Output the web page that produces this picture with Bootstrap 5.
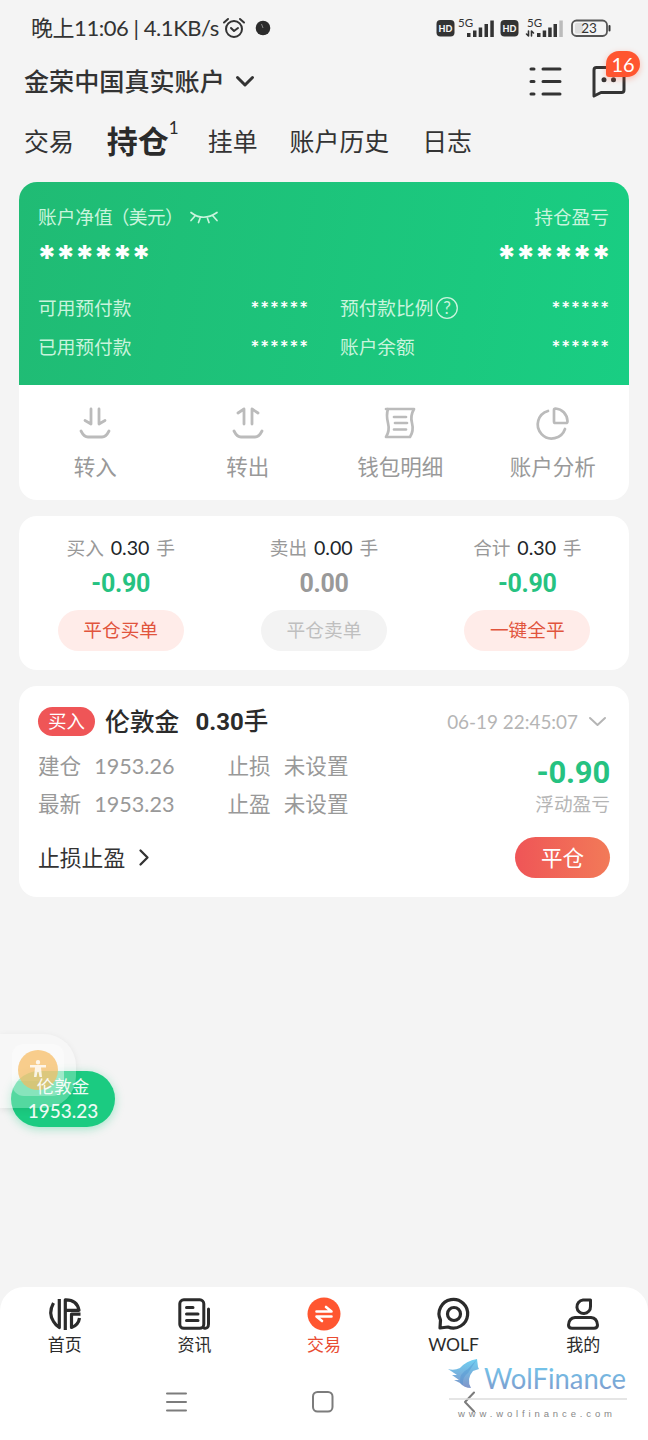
<!DOCTYPE html>
<html lang="zh-CN">
<head>
<meta charset="utf-8">
<meta name="viewport" content="width=device-width, initial-scale=1">
<title>持仓</title>
<link href="https://cdn.jsdelivr.net/npm/bootstrap@5.3.0/dist/css/bootstrap.min.css" rel="stylesheet">
<style>
body{background:#f4f4f4;color:#333;font-family:Lato,"Noto Sans CJK SC",sans-serif;font-size:18.7px;line-height:28px;width:648px;height:1440px;overflow:hidden;position:relative}
svg{display:block;flex:none;overflow:visible}
.ln{fill:none;stroke:currentColor;stroke-linecap:round;stroke-linejoin:round}
.statusbar{height:56px;padding-left:31px;font-size:22px}
.acct{height:50px;padding-left:24px}
.acct-name{font-size:25.1px;font-weight:500}
.count{position:absolute;left:77px;top:-29px;background:#ff5530;color:#fff;border-radius:13px 13px 13px 3px;width:34px;height:26px;font-size:20px;line-height:26px;text-align:center;box-shadow:0 2px 6px #ff553055}
.tabs{height:70px;padding-left:24px;font-size:24.9px}
.tabs .on{font-size:31px;font-weight:700;margin-left:33px;margin-right:39px;color:#2b2b2b}
.on sup{position:absolute;left:62px;top:-9px;font-size:17px;font-weight:400;line-height:20px}
.panel{background:#fff;border-radius:18px;margin:0 19px 16px;overflow:hidden}
.green{background:linear-gradient(100deg,#20bb74,#19ce83);height:203px;padding:21px 20px 0 19px;color:#c9f4dd}
.stars{color:#fff;font-family:Inter,sans-serif}
.s-lg{font-size:34px;font-weight:800;letter-spacing:-.95px;line-height:42px;height:42px;padding-top:6px}
.s-lg span:first-child{margin-left:-1px}
.s-sm{font-size:17px;font-weight:500;letter-spacing:.9px;line-height:28px;padding-top:0}
.s-sm,.s-lg span:last-child{margin-right:-1px}
.g-row{height:28px;margin-bottom:11px}
.actions{height:115px;color:#999;font-size:21.5px}
.actions svg{color:#bbb}
.act{margin-top:-2px;margin-bottom:14px}
.gray{color:#999}.dim{color:#b5b5b5}.up{color:#26c281}
.din{font-family:Roboto,"Noto Sans CJK SC",sans-serif;font-weight:700}
.lots{word-spacing:2px;height:28px}
.lots b{font-size:19.6px}
.sum{font-size:25px;line-height:44px;height:48px;letter-spacing:-.3px}
.pill{width:126px;height:41px;border-radius:21px;line-height:41px;font-size:18.7px;background:#ffece9;color:#e1543d;text-align:center}
.pill.off{background:#f3f3f3;color:#bfbfbf}
.tag{background:#ef5557;color:#fff;border-radius:15px;width:57px;height:29px;line-height:29px;text-align:center;font-size:18.5px}
.kv{font-size:21.6px;color:#999;height:37.5px;line-height:39px}
.closebtn{width:95px;height:41px;border-radius:21px;background:linear-gradient(90deg,#ef5557,#f27a58);color:#fff;font-size:21.6px;line-height:42px;text-align:center}
.quote{position:absolute;left:11px;top:1071px;width:104px;height:56px;border-radius:28px;background:#1bcb81;color:#fff;box-shadow:0 2px 10px #1bcb8160;text-align:center;font-size:17.5px;line-height:24px;padding-top:4px}
.quote-text{position:relative;z-index:3;opacity:.92}
.assist{position:absolute;left:0;top:1034px;width:76px;height:74px;border-radius:0 32px 32px 0;background:#ffffff40;box-shadow:0 2px 7px #00000014}
.assist svg{position:absolute;left:12px;top:10px}
.dock{position:absolute;left:0;right:0;bottom:0;height:153px;background:#fff;border-radius:24px 24px 0 0}
.dock .tab-i{font-size:17px;line-height:22px;height:76px;padding-top:11px;color:#2b2b2b}
.tab-i span{margin-top:4px}
.sysnav{height:77px;color:#7c7c7c}
.wm{position:absolute;left:446px;top:1354px}
</style>
</head>
<body>
<header class="statusbar d-flex align-items-center position-relative">
  <span class="text-nowrap" style="letter-spacing:-.45px;width:188px">晚上11:06 | 4.1KB/s</span>
  <svg style="margin-left:4px" width="22" height="22" viewBox="0 0 22 22"><g class="ln" stroke-width="2"><circle cx="11" cy="12" r="8"/><path d="M1 5.500L5 2M21 5.500L17 2M8 11l3 3 4-3"/></g></svg>
  <svg style="margin-left:10px" width="16" height="16"><circle cx="8" cy="8" r="7.300" fill="#2b2b2b"/><path d="M6.500 4L8 8" stroke="#888"/></svg>
  <svg class="position-absolute" style="left:436px;top:16px" width="176" height="24" viewBox="436 16 176 24" fill="#333" font-family="Lato">
    <rect x="436.500" y="20" width="18" height="16.500" rx="4"/><rect x="500.500" y="20" width="18" height="16.500" rx="4"/>
    <g fill="#f4f4f4" font-size="9" font-weight="900" text-anchor="middle"><text x="445.500" y="31.700">HD</text><text x="509.500" y="31.700">HD</text></g>
    <g font-size="11.500"><text x="458" y="27">5G</text><text x="527" y="27">5G</text></g>
    <path d="M467 33h3.500v4H467zM473 30.500h3.500V37H473zM478.700 27.500h3.500V37h-3.500zM484.500 24h3.500v13h-3.500zM490.300 20.500h3.500V37h-3.500z"/>
    <path d="M537 33h3.500v4H537zM542.700 30.500h3.500V37h-3.500zM548.200 27.500h3.500V37h-3.500zM553.500 24h3.500v13h-3.500z"/><path fill="#bbb" d="M559.300 20.500h3.500V37h-3.500z"/>
    <path class="ln" style="stroke-width:1.600" d="M528.500 31v5l-2-2M531.500 36v-5l2 2"/>
    <rect x="572" y="20.500" width="35" height="15.500" rx="4.500" fill="none" stroke="#555" stroke-width="1.800"/><rect x="575" y="23" width="8" height="10.500" rx="1.500" fill="#ddd"/><rect x="608.500" y="25" width="2" height="6.500" rx="1"/>
    <text x="589" y="33.300" font-size="13.500" text-anchor="middle">23</text>
  </svg>
</header>

<div class="acct d-flex align-items-center position-relative">
  <span class="acct-name">金荣中国真实账户</span>
  <svg style="margin-left:11px" width="18" height="11" viewBox="0 0 18 11"><path class="ln" stroke-width="3" d="M1.500 1.500L9 9l7.500-7.500"/></svg>
  <div class="position-absolute" style="left:529px;top:24px">
    <svg width="97" height="36" viewBox="529 65 97 36" style="margin-top:-15px"><g class="ln" stroke-width="3"><path d="M531 69h3M531 81.500h3M531 94h3M543 69h17M543 81.500h17M543 94h17"/><path d="M594 96V70q0-2.500 2.500-2.500h25q2.500 0 2.500 2.500V90q0 2.500-2.500 2.500H601z"/></g><circle cx="604" cy="79.700" r="2.500" fill="#333"/><circle cx="613.500" cy="79.700" r="2.500" fill="#333"/></svg>
    <span class="count">16</span>
  </div>
</div>

<nav class="tabs d-flex align-items-center" style="margin-bottom:6px">
  <span>交易</span><span class="on position-relative">持仓<sup>1</sup></span><span>挂单</span><span style="margin-left:32px">账户历史</span><span style="margin-left:33px">日志</span>
</nav>

<section class="panel">
  <div class="green">
    <div class="d-flex justify-content-between"><span class="d-flex align-items-center">账户净值<span style="margin:0 2px 0 -2px;letter-spacing:-.6px">（美元）</span>
      <svg style="margin-left:5px" width="28" height="12" viewBox="0 0 28 12"><path class="ln" stroke-width="1.700" d="M1 1.500Q13 11 27 1.500M5 5L1 9.500M10 7.500L8.500 11.500M17.500 7.500L19 11.500M23 5L27 9.500"/></svg></span><span>持仓盈亏</span></div>
    <div class="d-flex justify-content-between stars s-lg"><span>******</span><span>******</span></div>
    <div class="row g-0 g-row" style="margin-top:21px"><div class="d-flex justify-content-between" style="width:270px"><span>可用预付款</span><span class="stars s-sm">******</span></div>
      <div class="col d-flex justify-content-between" style="margin-left:32px"><span class="d-flex align-items-center" style="height:28px">预付款比例<svg style="margin-left:3px" width="22" height="22" viewBox="0 0 22 22"><circle class="ln" stroke-width="1.300" cx="11" cy="11" r="10.300"/><text x="11" y="17" font-size="17" text-anchor="middle" fill="currentColor">?</text></svg></span><span class="stars s-sm">******</span></div></div>
    <div class="row g-0 g-row"><div class="d-flex justify-content-between" style="width:270px"><span>已用预付款</span><span class="stars s-sm">******</span></div>
      <div class="col d-flex justify-content-between" style="margin-left:32px"><span>账户余额</span><span class="stars s-sm">******</span></div></div>
  </div>
  <div class="actions row g-0 text-center">
    <div class="col pt-4 d-flex flex-column align-items-center"><svg class="act" width="32" height="32" viewBox="0 0 32 32"><g class="ln" stroke-width="2.800"><path d="M12 2V17L6 13.500M20 2V17L26 13.500M2 24Q5 30 9 30H23Q27 30 30 24"/></g></svg><span>转入</span></div>
    <div class="col pt-4 d-flex flex-column align-items-center"><svg class="act" width="32" height="32" viewBox="0 0 32 32"><g class="ln" stroke-width="2.800"><path d="M12 17V2L6 6M20 17V2L26 6M2 24Q5 30 9 30H23Q27 30 30 24"/></g></svg><span>转出</span></div>
    <div class="col pt-4 d-flex flex-column align-items-center"><svg class="act" width="32" height="32" viewBox="0 0 32 32"><g class="ln" stroke-width="2.700"><path d="M2 2H30Q26 9 28 16Q30 24 26 30H2Q6 24 4 16Q2 8 4 2M10 10H22M11 16H23M10 22.500H22"/></g></svg><span>钱包明细</span></div>
    <div class="col pt-4 d-flex flex-column align-items-center"><svg class="act" width="32" height="32" viewBox="0 0 32 32"><g class="ln" stroke-width="2.700"><path d="M11 4A14 14 0 1 0 28 22M17 3Q17 1.500 18.500 1.500C25 2 30 7 30.500 14Q30.500 16 29 16H18.500Q17 16 17 14.500Z"/></g></svg><span>账户分析</span></div>
  </div>
</section>

<section class="panel row g-0" style="height:154px;padding-top:18px">
  <div class="col-4 d-flex flex-column align-items-center gray"><div class="lots">买入 <b class="fw-normal text-dark">0.30</b> 手</div><div class="din sum up">-0.90</div><div class="pill">平仓买单</div></div>
  <div class="col-4 d-flex flex-column align-items-center gray"><div class="lots">卖出 <b class="fw-normal text-dark">0.00</b> 手</div><div class="din sum">0.00</div><div class="pill off">平仓卖单</div></div>
  <div class="col-4 d-flex flex-column align-items-center gray"><div class="lots">合计 <b class="fw-normal text-dark">0.30</b> 手</div><div class="din sum up">-0.90</div><div class="pill">一键全平</div></div>
</section>

<section class="panel" style="height:211px;padding:20px 19px 0">
  <div class="d-flex align-items-center" style="height:31px"><span class="tag">买入</span><span style="font-size:24.8px;font-weight:500;margin-left:10px;color:#2b2b2b">伦敦金</span><span class="din" style="font-size:24px;margin-left:16px;color:#2b2b2b">0.30<span style="font-weight:500;font-size:24.5px">手</span></span>
    <span class="dim ms-auto" style="font-size:18.9px">06-19 22:45:07</span><svg class="dim" style="margin:0 4px 0 11px" width="17" height="9" viewBox="0 0 17 9"><path class="ln" stroke-width="2" d="M1 1l7.500 7L16 1"/></svg></div>
  <div class="d-flex" style="margin-top:10px">
    <div style="width:189.500px"><div class="kv">建仓<span style="margin-left:13px">1953.26</span></div><div class="kv">最新<span style="margin-left:13px">1953.23</span></div></div>
    <div><div class="kv">止损<span style="margin-left:13px">未设置</span></div><div class="kv">止盈<span style="margin-left:13px">未设置</span></div></div>
    <div class="ms-auto text-end"><div class="din up" style="font-size:31px;line-height:38px;padding-top:7px;height:44px;letter-spacing:-.2px">-0.90</div><div class="dim" style="line-height:26px">浮动盈亏</div></div>
  </div>
  <div class="d-flex align-items-center justify-content-between" style="margin-top:15px;height:41px"><span class="d-flex align-items-center" style="font-size:21.8px">止损止盈<svg style="margin-left:14px" width="10" height="17" viewBox="0 0 10 17"><path class="ln" stroke-width="2.300" d="M1.500 1.500l7 7-7 7"/></svg></span><span class="closebtn">平仓</span></div>
</section>

<div class="quote"><div class="quote-text">伦敦金<div style="font-size:19px;font-weight:500">1953.23</div></div></div>
<div class="assist"><svg width="52" height="52" viewBox="0 0 52 52"><rect width="52" height="52" rx="12" fill="#fff" opacity=".3"/><path d="M12 0H40Q52 0 52 12V37H0V12Q0 0 12 0" fill="#fff" opacity=".2"/><circle cx="26" cy="26" r="20" fill="#f7b95c" opacity=".7"/><path fill="#fff" opacity=".8" d="M18 21h16v2.500h-5L30 33h-2.500l-1-5h-1l-1 5H22l1-9.500h-5zM26 16a2.200 2.200 0 1 1 0 4.400a2.200 2.200 0 1 1 0-4.400"/></svg></div>

<footer class="dock">
  <div class="row g-0 text-center">
    <div class="col tab-i d-flex flex-column align-items-center"><svg width="32" height="32" viewBox="0 0 32 32"><g fill="none" stroke="#2b2b2b" stroke-width="3.200" stroke-linejoin="round"><path d="M4.500 5Q-1 15 4.500 23.500Q6.500 27 10.300 29.500V1"/><path d="M16.300 32V1.800Q28 1.500 30 12.300H16.300M31.500 16.200H22.500V29.500Q29.500 27 30.500 20" /></g></svg><span>首页</span></div>
    <div class="col tab-i d-flex flex-column align-items-center"><svg width="32" height="32" viewBox="0 0 32 32"><g class="ln" stroke-width="3"><rect x="1.800" y="1.800" width="24" height="28.500" rx="4"/><path d="M26 30Q30.500 31 30.500 26V11M8.500 9.500H15M8.500 16H20M8.500 22.500H20"/></g></svg><span>资讯</span></div>
    <div class="col tab-i d-flex flex-column align-items-center" style="color:#e94c32"><svg width="34" height="34" viewBox="0 0 34 34" style="margin:-1px 0"><circle cx="17" cy="17" r="16.500" fill="#ff5630"/><g class="ln" style="color:#fff" stroke-width="2.600"><path d="M9.500 14.500H24.500L19 10M24.500 19.500H9.500l5.500 4.500"/></g></svg><span>交易</span></div>
    <div class="col tab-i d-flex flex-column align-items-center"><svg width="32" height="32" viewBox="0 0 32 32"><g class="ln" stroke-width="3.200"><path d="M2 30L2.500 22A14.300 14.300 0 1 1 10 29z"/><circle cx="16" cy="16" r="6.500"/></g></svg><span style="font-size:17.500px">WOLF</span></div>
    <div class="col tab-i d-flex flex-column align-items-center"><svg width="32" height="32" viewBox="0 0 32 32"><g class="ln" stroke-width="3"><path d="M23.500 2H16A6.800 6.800 0 1 0 23.500 8.500zM8 19.500H24Q30 20 30.500 27Q30.500 30.300 27 30.300H5Q1.500 30.300 1.500 27Q2 20 8 19.500z"/></g></svg><span>我的</span></div>
  </div>
  <div class="sysnav"><svg width="648" height="77" viewBox="0 1363 648 77"><g class="ln" stroke-width="2"><path d="M167 1393.500H186M167 1402H186M167 1410.500H186M474 1392.500L465 1402L474 1411.500"/><rect x="313" y="1392" width="19.500" height="19.500" rx="4.500"/></g></svg></div>
</footer>
<svg class="wm" width="184" height="66" viewBox="446 1354 184 66">
  <defs><linearGradient id="sky" x1="0" y1="0" x2="0" y2="1"><stop offset="0" stop-color="#6fd0f2"/><stop offset="1" stop-color="#8095c9"/></linearGradient></defs>
  <path fill="url(#sky)" d="M448 1369Q454 1371 460 1368Q466 1361 477 1359L478 1367L479 1369L473 1371Q466 1379 471 1388Q464 1388 460 1383L454 1380L459 1380L452 1375L457 1375Z"/>
  <path fill="#4b8fd0" opacity=".4" d="M477 1359L468 1369Q459 1373 460 1383L463 1385Q462 1377 468 1373z"/>
  <text x="484" y="1388.500" textLength="142" lengthAdjust="spacingAndGlyphs" font-family="Lato" font-size="28" fill="url(#sky)">WolFinance</text>
  <path d="M449 1399H627" stroke="#ddd" stroke-width="1.300"/>
  <text x="458" y="1416.500" textLength="154" font-family="Liberation Sans" font-size="9.500" fill="#888">www.wolfinance.com</text>
</svg>
<script src="https://cdn.jsdelivr.net/npm/bootstrap@5.3.0/dist/js/bootstrap.bundle.min.js"></script>
</body>
</html>
